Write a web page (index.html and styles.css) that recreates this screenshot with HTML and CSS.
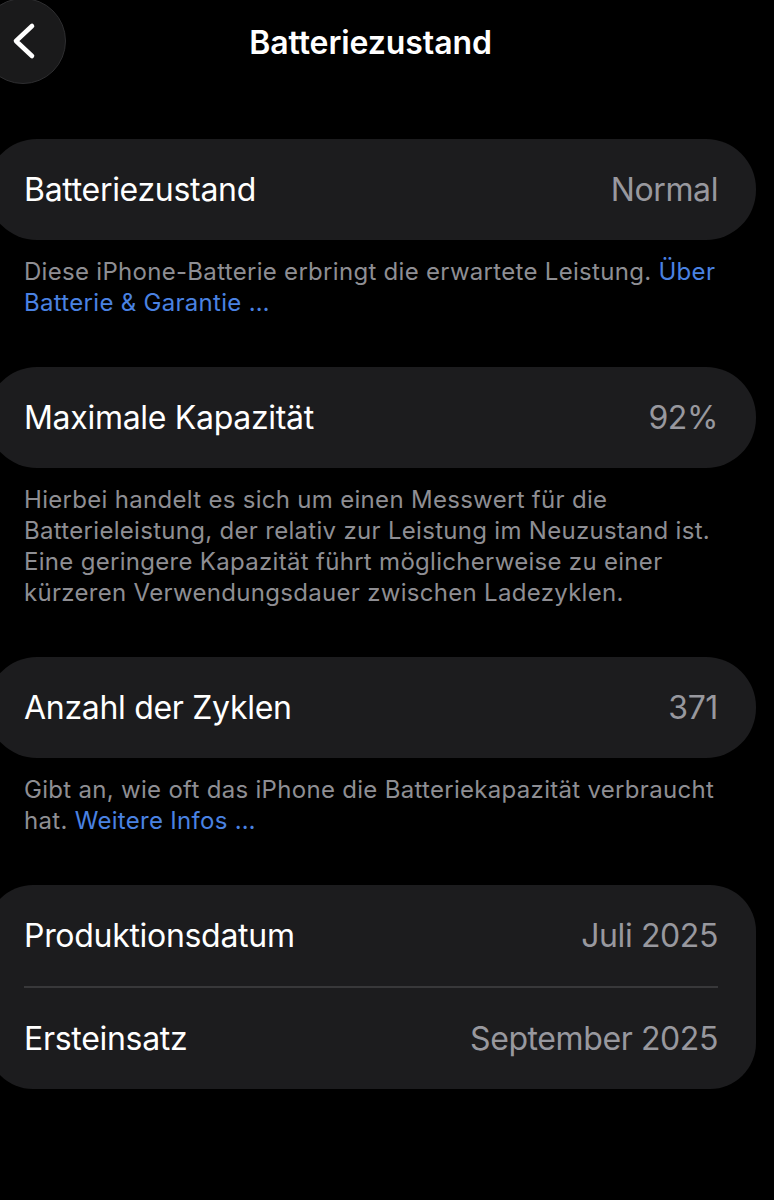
FILE: index.html
```html
<!DOCTYPE html>
<html lang="de">
<head>
<meta charset="utf-8">
<link rel="stylesheet" href="styles.css">
</head>
<body>
<div class="page">
  <header class="nav">
    <div class="back">
      <svg class="chev" viewBox="0 0 30 40" width="30" height="40"><path d="M22 5 L6 20 L22 35" fill="none" stroke="#fff" stroke-width="4.6" stroke-linecap="round" stroke-linejoin="round"/></svg>
    </div>
    <h1 class="title">Batteriezustand</h1>
  </header>

  <section class="group">
    <div class="card">
      <div class="row"><span class="label">Batteriezustand</span><span class="value">Normal</span></div>
    </div>
    <p class="footer">Diese iPhone-Batterie erbringt die erwartete Leistung. <span class="link">Über Batterie &amp; Garantie …</span></p>
  </section>

  <section class="group">
    <div class="card">
      <div class="row"><span class="label">Maximale Kapazität</span><span class="value">92%</span></div>
    </div>
    <p class="footer">Hierbei handelt es sich um einen Messwert für die Batterieleistung, der relativ zur Leistung im Neuzustand ist. Eine geringere Kapazität führt möglicherweise zu einer kürzeren Verwendungsdauer zwischen Ladezyklen.</p>
  </section>

  <section class="group">
    <div class="card">
      <div class="row"><span class="label">Anzahl der Zyklen</span><span class="value">371</span></div>
    </div>
    <p class="footer">Gibt an, wie oft das iPhone die Batteriekapazität verbraucht hat. <span class="link">Weitere Infos …</span></p>
  </section>

  <section class="group">
    <div class="card card-multi">
      <div class="row"><span class="label">Produktionsdatum</span><span class="value">Juli 2025</span></div>
      <div class="divider"></div>
      <div class="row"><span class="label">Ersteinsatz</span><span class="value">September 2025</span></div>
    </div>
  </section>
</div>
</body>
</html>
```

FILE: styles.css
```css
html, body {
  margin: 0;
  padding: 0;
  background: #000;
}
body {
  font-family: Inter, "Noto Sans", "Liberation Sans", sans-serif;
  color: #fff;
  width: 774px;
  height: 1200px;
  overflow: hidden;
}
.page {
  display: flex;
  flex-direction: column;
}
.nav {
  height: 139px;
  display: flex;
  align-items: flex-start;
  justify-content: center;
  position: relative;
}
.back {
  position: absolute;
  left: -20px;
  top: -2px;
  width: 86px;
  height: 86px;
  border-radius: 50%;
  background: #1a1a1b;
  border: 1px solid #2e2e30;
  box-sizing: border-box;
  display: flex;
  align-items: center;
  justify-content: flex-start;
}
.chev {
  margin-left: 29px;
  margin-top: -1px;
}
.title {
  margin: 24px 0 0 -33px;
  font-size: 32px;
  font-weight: 600;
  letter-spacing: -0.1px;
  line-height: 38px;
}
.group {
  display: flex;
  flex-direction: column;
}
.card {
  margin-left: -13px;
  width: 769px;
  background: #1c1c1e;
  border-radius: 50px;
  box-sizing: border-box;
  padding: 0 38px 0 37px;
}
.card-multi {
  border-radius: 46px;
}
.row {
  height: 101px;
  display: flex;
  align-items: center;
  justify-content: space-between;
}
.label {
  font-size: 32px;
  letter-spacing: -0.3px;
  color: #fff;
}
.value {
  font-size: 32px;
  letter-spacing: -0.4px;
  color: #98989e;
}
.divider {
  height: 2px;
  background: #38383a;
}
.footer {
  margin: 16px 50px 49px 24px;
  font-size: 24px;
  line-height: 31px;
  color: #8e8e93;
  letter-spacing: 0.3px;
}
.link {
  color: #4a82e2;
}
```
